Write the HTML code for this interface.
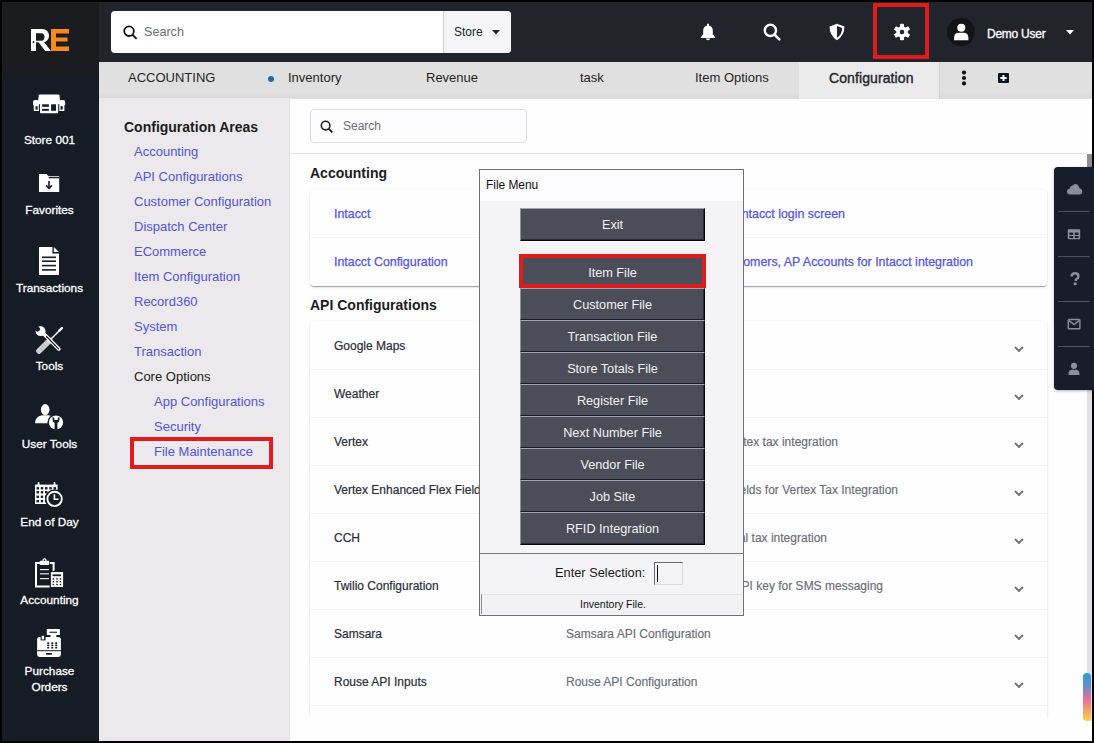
<!DOCTYPE html>
<html><head><meta charset="utf-8">
<style>
*{box-sizing:border-box;margin:0;padding:0}
html,body{width:1094px;height:743px;overflow:hidden;background:#000;font-family:"Liberation Sans",sans-serif}
div,span,svg{position:absolute}
.t{white-space:nowrap;line-height:1}
/* sidebar */
#side{left:2px;top:2px;width:97px;height:739px;background:#161c26}
#logo{left:2px;top:2px;width:97px;height:73px;background:#1b1c20}
.nav{left:1px;width:97px;text-align:center;color:#fff;font-size:11.8px;line-height:16px;-webkit-text-stroke:0.3px #fff}
/* topbar */
#top{left:99px;top:2px;width:993px;height:60px;background:#22242c}
#search{left:111px;top:11px;width:400px;height:42px;background:#fff;border-radius:4px;overflow:hidden}
#store{left:332px;top:0;width:68px;height:42px;background:#f5f4f7;border-left:1px solid #cfcfd3}
#tabs{left:99px;top:62px;width:993px;height:37px;background:#e1e0e1}
.tab{top:71px;font-size:13px;color:#1f1f1f}
#cfg{left:99px;top:98px;width:191px;height:643px;background:#ebe9eb;border-right:1px solid #e2e1e3}
.lnk{font-size:13px;color:#5256d5}
#main{left:290px;top:99px;width:802px;height:642px;background:#fefdff}
.h{font-size:14px;font-weight:bold;color:#1c1c22}
.card{background:#fefdff;border-radius:4px;box-shadow:0 2px 1px -1px rgba(0,0,0,.2),0 1px 1px 0 rgba(0,0,0,.14),0 1px 3px 0 rgba(0,0,0,.12)}
.sep{left:0;width:100%;height:1px;background:#f4f3f6}
.row{font-size:12px;color:#2b2e38;-webkit-text-stroke:0.2px #2b2e38}
.desc{font-size:12px;color:#6b6e76;-webkit-text-stroke:0.15px #6b6e76}
.clink{font-size:12.4px;color:#5357dc;-webkit-text-stroke:0.25px #5357dc}
.chev{left:1014px;width:10px;height:7px}
/* dialog */
#dlg{left:479px;top:169px;width:265px;height:447px;background:#f4f3f6;border:1px solid #707070}
.btn{left:40px;width:185px;height:32px;background:#4b4d58;color:#f2f2f2;font-size:12.7px;text-align:center;line-height:32px;border-top:1px solid #a4a5af;border-left:1px solid #8f9098;border-right:1px solid #050507;border-bottom:1px solid #191a24;box-shadow:inset -1px 0 #2c2d34}
</style></head><body>
<!-- SIDEBAR -->
<div id="side"></div>
<div id="logo"></div>
<svg style="left:30px;top:28px" width="40" height="24" viewBox="0 0 40 24">
  <path d="M1 1H11.8C16.6 1 19 4.2 19 7.8C19 11 17.2 13.4 14.2 14.2L21 23H15.2L8.6 14.2H6V23H1Z M6 5.2V12.8H11.6C13.6 12.8 14.5 10.6 14.5 8.8C14.5 6.6 13.3 5.2 11.6 5.2Z" fill="#fff" fill-rule="evenodd"/>
  <circle cx="3.5" cy="14" r="0.9" fill="#1b1c20"/>
  <path d="M21 1H39V5.4H26V9.6H37.5V13.6H26V18.6H39V23H21Z" fill="#f7891f"/>
</svg>
<div class="nav" style="top:132px">Store 001</div>
<div class="nav" style="top:202px">Favorites</div>
<div class="nav" style="top:280px">Transactions</div>
<div class="nav" style="top:358px">Tools</div>
<div class="nav" style="top:436px">User Tools</div>
<div class="nav" style="top:514px">End of Day</div>
<div class="nav" style="top:592px">Accounting</div>
<div class="nav" style="top:663px">Purchase<br>Orders</div>
<!-- store icon -->
<svg style="left:30px;top:90px" width="40" height="28" viewBox="0 0 40 28">
  <path d="M9.6 4.6H28.6Q29.2 4.6 29.4 5.3L30.4 13.2Q30.5 14.3 29.4 14.3H8.8Q7.7 14.3 7.8 13.2L8.8 5.3Q9 4.6 9.6 4.6Z" fill="#fff"/>
  <rect x="10" y="14" width="18.2" height="9.2" rx="0.8" fill="#fff"/>
  <rect x="12.1" y="14.3" width="6.8" height="2.5" fill="#161c26"/>
  <rect x="12.1" y="18.9" width="6.8" height="1.9" fill="#161c26"/>
  <rect x="21.1" y="14.3" width="4.9" height="6.5" fill="#161c26"/>
  <path d="M3 15.2V12Q3 10 5 10H7Q8.9 10 8.9 12V15.2Z" fill="#fff"/>
  <rect x="3.8" y="15" width="5.1" height="6" rx="0.6" fill="#fff"/>
  <rect x="5.5" y="16.2" width="2.2" height="3.4" fill="#161c26"/>
  <path d="M35.2 15.2V12Q35.2 10 33.2 10H31.2Q29.3 10 29.3 12V15.2Z" fill="#fff"/>
  <rect x="29.3" y="15" width="5.1" height="6" rx="0.6" fill="#fff"/>
  <rect x="30.5" y="16.2" width="2.2" height="3.4" fill="#161c26"/>
</svg>
<!-- favorites folder -->
<svg style="left:38px;top:172px" width="24" height="22" viewBox="0 0 24 22">
  <path d="M1 2H8.6L10.6 4.2H21.2V20H1Z" fill="#fff"/>
  <rect x="10.8" y="5" width="10.4" height="1.3" fill="#161c26"/>
  <path d="M11 9V16.3" stroke="#161c26" stroke-width="1.6"/>
  <path d="M8.1 13.4L11 16.4L13.9 13.4" fill="none" stroke="#161c26" stroke-width="1.6"/>
</svg>
<!-- transactions doc -->
<svg style="left:38px;top:246px" width="22" height="30" viewBox="0 0 22 30">
  <path d="M1 1H14.4V7.4H21V29H1Z" fill="#fff"/>
  <path d="M15.8 1L21 6.1H15.8Z" fill="#fff"/>
  <rect x="4" y="10.5" width="14" height="1.6" fill="#161c26"/>
  <rect x="4" y="14.4" width="14" height="1.6" fill="#161c26"/>
  <rect x="4" y="18.8" width="14" height="1.6" fill="#161c26"/>
  <rect x="4" y="23.1" width="14" height="1.6" fill="#161c26"/>
</svg>
<!-- tools -->
<svg style="left:33px;top:324px" width="30" height="30" viewBox="0 0 30 30">
  <path d="M27.8 5.2L16.5 16.5" stroke="#fff" stroke-width="1.5"/>
  <path d="M29 4L26.6 6.4" stroke="#fff" stroke-width="2.4" stroke-linecap="round"/>
  <path d="M16.6 16.4L6 27" stroke="#cfcfd2" stroke-width="5.6" stroke-linecap="round"/>
  <path d="M8.6 21.8L11.2 24.4M6.8 23.6L9.4 26.2M10.6 20.2L13.2 22.8" stroke="#8f9196" stroke-width="0.5"/>
  <path d="M9.5 8.5L25.8 25" stroke="#fff" stroke-width="3.8" stroke-linecap="round"/>
  <path d="M13.5 12.5L25.6 24.8" stroke="#161c26" stroke-width="1.2" stroke-linecap="round"/>
  <circle cx="7.6" cy="7.2" r="4.9" fill="#fff"/>
  <path d="M3.8 1.2L7.2 4.6L6.4 7L4 7.8L0.6 4.4Z" fill="#161c26"/>
</svg>
<!-- user tools -->
<svg style="left:34px;top:402px" width="30" height="30" viewBox="0 0 30 30">
  <ellipse cx="11.2" cy="7.6" rx="4.3" ry="5.6" fill="#fff"/>
  <path d="M1 21.2Q1 14.5 8 13.2H14.5Q17 13.5 18 14.5L15 21.2Z" fill="#fff"/>
  <circle cx="22" cy="20.5" r="8.6" fill="#161c26"/>
  <circle cx="22" cy="20.5" r="7.1" fill="#fff"/>
  <path d="M18.5 14.8V17.4Q18.5 19.9 20.6 20.8V28.5H23.4V20.8Q25.5 19.9 25.5 17.4V14.8L23.8 16V18.1H20.2V16Z" fill="#161c26"/>
</svg>
<!-- end of day -->
<svg style="left:34px;top:480px" width="30" height="30" viewBox="0 0 30 30">
  <rect x="1" y="4.6" width="22.6" height="19.4" fill="#fff"/>
  <rect x="3.7" y="2" width="1.8" height="4" rx="0.9" fill="#fff"/>
  <rect x="19.6" y="2" width="1.8" height="4" rx="0.9" fill="#fff"/>
  <g fill="#161c26">
    <rect x="2.5" y="7.1" width="2.5" height="2.3"/><rect x="6.8" y="7.1" width="2.4" height="2.3"/><rect x="11" y="7.1" width="2.5" height="2.3"/><rect x="15.4" y="7.1" width="2.4" height="2.3"/><rect x="19.5" y="7.1" width="2.5" height="2.3"/>
    <rect x="2.5" y="11.1" width="2.5" height="2.3"/><rect x="6.8" y="11.1" width="2.4" height="2.3"/><rect x="11" y="11.1" width="2.5" height="2.3"/><rect x="15.4" y="11.1" width="2.4" height="2.3"/><rect x="19.5" y="11.1" width="2.5" height="2.3"/>
    <rect x="2.5" y="15.6" width="2.5" height="2.3"/><rect x="6.8" y="15.6" width="2.4" height="2.3"/><rect x="11" y="15.6" width="2.5" height="2.3"/>
    <rect x="2.5" y="20" width="2.5" height="2.3"/><rect x="6.8" y="20" width="2.4" height="2.3"/><rect x="11" y="20" width="2.5" height="2.3"/>
  </g>
  <circle cx="20.6" cy="18.9" r="9.6" fill="#161c26"/>
  <circle cx="20.6" cy="18.9" r="7.2" fill="none" stroke="#fff" stroke-width="1.9"/>
  <path d="M20.4 14.3V19.2H24.6" fill="none" stroke="#fff" stroke-width="1.6"/>
</svg>
<!-- accounting -->
<svg style="left:34px;top:557px" width="30" height="32" viewBox="0 0 30 32">
  <path d="M6 6H2V29.4H19.6V15M16 6H19.6V15" fill="none" stroke="#fff" stroke-width="2"/>
  <rect x="5.8" y="3.8" width="9.4" height="4.2" rx="0.8" fill="#fff"/>
  <circle cx="10.5" cy="3.4" r="1.5" fill="none" stroke="#fff" stroke-width="1.1"/>
  <rect x="6" y="12" width="9" height="1.2" fill="#e8e8ea"/>
  <rect x="6" y="16.2" width="9" height="1.2" fill="#e8e8ea"/>
  <rect x="6" y="21" width="9" height="1.2" fill="#e8e8ea"/>
  <rect x="15.6" y="13.8" width="14.4" height="17.6" fill="#161c26"/>
  <rect x="16.9" y="15" width="12.2" height="15" rx="0.6" fill="#fff"/>
  <rect x="18.5" y="17.4" width="8.6" height="1.8" fill="#161c26"/>
  <g fill="#161c26"><rect x="18.6" y="21.2" width="1.5" height="1.4"/><rect x="22.2" y="21.2" width="1.5" height="1.4"/><rect x="25.7" y="21.2" width="1.5" height="1.4"/>
  <rect x="18.6" y="24" width="1.5" height="1.4"/><rect x="22.2" y="24" width="1.5" height="1.4"/><rect x="25.7" y="24" width="1.5" height="1.4"/>
  <rect x="18.6" y="26.8" width="1.5" height="1.4"/><rect x="22.2" y="26.8" width="1.5" height="1.4"/><rect x="25.7" y="26.8" width="1.5" height="1.4"/></g>
</svg>
<!-- purchase orders -->
<svg style="left:35px;top:627px" width="28" height="32" viewBox="0 0 28 32">
  <rect x="11.8" y="1.9" width="13.1" height="6.2" rx="0.7" fill="#fff"/>
  <rect x="14.5" y="4.7" width="7.5" height="1.1" fill="#161c26"/>
  <rect x="15.5" y="7.6" width="5.8" height="2.6" fill="#fff"/>
  <path d="M2.1 12.6Q2.1 9.9 4.6 9.9H23.4Q25.9 9.9 25.9 12.6V27.6Q25.9 30 23.5 30H4.5Q2.1 30 2.1 27.6Z" fill="#fff"/>
  <rect x="5.6" y="8.4" width="5" height="5" fill="#161c26"/>
  <rect x="6.7" y="8.8" width="2.4" height="3.6" fill="#fff"/>
  <g fill="#161c26"><rect x="12.1" y="15.2" width="2.2" height="1.7" rx="0.7"/><rect x="16.2" y="15.2" width="2.2" height="1.7" rx="0.7"/><rect x="20.1" y="15.2" width="2.2" height="1.7" rx="0.7"/>
  <rect x="12.1" y="17.6" width="2.2" height="1.7" rx="0.7"/><rect x="16.2" y="17.6" width="2.2" height="1.7" rx="0.7"/><rect x="20.1" y="17.6" width="2.2" height="1.7" rx="0.7"/>
  <rect x="12.1" y="20" width="2.2" height="1.6" rx="0.7"/><rect x="16.2" y="20" width="2.2" height="1.6" rx="0.7"/><rect x="20.1" y="20" width="2.2" height="1.6" rx="0.7"/></g>
  <rect x="2.1" y="23.2" width="23.8" height="1" fill="#161c26"/>
  <rect x="11.1" y="26.1" width="5.8" height="1.7" rx="0.5" fill="#161c26"/>
</svg>
<!-- TOPBAR -->
<div id="top"></div>
<div id="search">
  <svg style="left:11px;top:13px" width="16" height="16" viewBox="0 0 16 16"><circle cx="7" cy="7.2" r="4.8" fill="none" stroke="#111" stroke-width="1.8"/><path d="M10.4 10.6L14.6 14.8" stroke="#111" stroke-width="1.9"/></svg>
  <span class="t" style="left:33px;top:15px;font-size:12.6px;color:#6b6e74">Search</span>
  <div id="store"><span class="t" style="left:10px;top:15px;font-size:12px;color:#23262e">Store</span>
  <svg style="left:48px;top:19px" width="8" height="5" viewBox="0 0 8 5"><path d="M0 0H8L4 4.5Z" fill="#23262e"/></svg></div>
</div>

<!-- bell -->
<svg style="left:700px;top:23px" width="16" height="18" viewBox="0 0 16 18">
  <path d="M8 0.6Q9 0.6 9 1.7V2.4Q12.8 3.2 12.8 7.6V11.2L15.2 14.2V14.9H0.8V14.2L3.2 11.2V7.6Q3.2 3.2 7 2.4V1.7Q7 0.6 8 0.6Z" fill="#fff"/>
  <path d="M5.8 15.5H10.2Q9.8 17.2 8 17.2Q6.2 17.2 5.8 15.5Z" fill="#fff"/>
</svg>
<!-- search -->
<svg style="left:762px;top:22px" width="20" height="20" viewBox="0 0 20 20">
  <circle cx="8.4" cy="8.4" r="5.6" fill="none" stroke="#fff" stroke-width="2.4"/>
  <path d="M12.5 12.5L17.3 17.3" stroke="#fff" stroke-width="2.6" stroke-linecap="round"/>
</svg>
<!-- shield -->
<svg style="left:828px;top:23px" width="18" height="18" viewBox="0 0 18 18">
  <path d="M9 0.8L16.4 3.6Q16.6 12.6 9 17.2Q1.4 12.6 1.6 3.6Z" fill="#fff"/>
  <path d="M9 3.1L14.2 5.1Q14 11.8 9 14.8Z" fill="#22242c"/>
</svg>
<!-- gear -->
<svg style="left:893px;top:23px" width="18" height="18" viewBox="0 0 18 18">
  <g transform="translate(9 9)">
    <g fill="#fff">
      <rect x="-2" y="-8.2" width="4" height="16.4" rx="0.8"/>
      <rect x="-2" y="-8.2" width="4" height="16.4" rx="0.8" transform="rotate(60)"/>
      <rect x="-2" y="-8.2" width="4" height="16.4" rx="0.8" transform="rotate(120)"/>
    </g>
    <circle r="5.8" fill="#fff"/>
    <circle r="2.3" fill="#22242c"/>
  </g>
</svg>
<div style="left:873px;top:3px;width:56px;height:56px;border:4px solid #e01b1b"></div>
<!-- avatar -->
<div style="left:947px;top:18px;width:28px;height:28px;border-radius:50%;background:#141418"></div>
<svg style="left:953px;top:23px" width="16" height="18" viewBox="0 0 16 18">
  <circle cx="8.3" cy="4.8" r="4" fill="#fff"/>
  <path d="M1 17.3V15.2Q1 9.8 6 9.8H10.6Q15.4 9.8 15.4 15.2V17.3Z" fill="#fff"/>
</svg>
<span class="t" style="left:987px;top:28px;font-size:12px;color:#fff;letter-spacing:-0.25px;-webkit-text-stroke:0.3px #fff">Demo User</span>
<svg style="left:1066px;top:30px" width="8" height="5" viewBox="0 0 8 5"><path d="M0 0H8L4 4.5Z" fill="#fff"/></svg>

<div id="tabs"></div>
<div style="left:99px;top:93px;width:993px;height:5px;background:linear-gradient(rgba(0,0,0,0),rgba(0,0,0,.025))"></div>
<div style="left:799px;top:62px;width:140px;height:37px;background:#ebeaeb"></div>
<div style="left:939px;top:62px;width:1px;height:37px;background:#cfcfd1"></div>
<span class="t tab" style="left:128px">ACCOUNTING</span>
<div style="left:268px;top:76px;width:6px;height:6px;border-radius:50%;background:#1a6ea8"></div>
<span class="t tab" style="left:288px">Inventory</span>
<span class="t tab" style="left:426px">Revenue</span>
<span class="t tab" style="left:580px">task</span>
<span class="t tab" style="left:695px">Item Options</span>
<span class="t tab" style="left:829px;top:71px;font-size:14px;color:#26272d;-webkit-text-stroke:0.4px #26272d;letter-spacing:0.1px">Configuration</span>
<svg style="left:961px;top:70px" width="6" height="16" viewBox="0 0 6 16"><circle cx="3" cy="2.6" r="2.1" fill="#111"/><circle cx="3" cy="8" r="2.1" fill="#111"/><circle cx="3" cy="13.4" r="2.1" fill="#111"/></svg>
<svg style="left:998px;top:73px" width="11" height="10" viewBox="0 0 11 10"><rect x="0" y="0" width="11" height="10" rx="1" fill="#0f1326"/><path d="M5.5 2V8M2.3 5H8.7" stroke="#fff" stroke-width="2"/></svg>

<!-- CONFIG PANEL -->
<div id="cfg"></div>
<span class="t h" style="left:124px;top:120px">Configuration Areas</span>
<span class="t lnk" style="left:134px;top:145px">Accounting</span>
<span class="t lnk" style="left:134px;top:170px">API Configurations</span>
<span class="t lnk" style="left:134px;top:195px">Customer Configuration</span>
<span class="t lnk" style="left:134px;top:220px">Dispatch Center</span>
<span class="t lnk" style="left:134px;top:245px">ECommerce</span>
<span class="t lnk" style="left:134px;top:270px">Item Configuration</span>
<span class="t lnk" style="left:134px;top:295px">Record360</span>
<span class="t lnk" style="left:134px;top:320px">System</span>
<span class="t lnk" style="left:134px;top:345px">Transaction</span>
<span class="t lnk" style="left:134px;top:370px;color:#222">Core Options</span>
<span class="t lnk" style="left:154px;top:395px">App Configurations</span>
<span class="t lnk" style="left:154px;top:420px">Security</span>
<span class="t lnk" style="left:154px;top:445px">File Maintenance</span>
<div style="left:130px;top:437px;width:143px;height:32px;border:4px solid #e01b1b"></div>

<!-- MAIN -->
<div id="main"></div>
<div style="left:310px;top:109px;width:217px;height:34px;border:1px solid #dcdbde;border-radius:4px;background:#fdfcfe"></div>
<svg style="left:320px;top:120px" width="14" height="13" viewBox="0 0 14 13"><circle cx="5.6" cy="5.6" r="4.3" fill="none" stroke="#222" stroke-width="1.6"/><path d="M8.8 8.8L12.3 12.3" stroke="#222" stroke-width="1.8"/></svg>
<span class="t" style="left:343px;top:120px;font-size:12px;color:#6e7076">Search</span>
<div style="left:289px;top:153px;width:798px;height:1px;background:#e4e3e6"></div>

<span class="t h" style="left:310px;top:166px">Accounting</span>
<div class="card" style="left:310px;top:190px;width:737px;height:96px">
  <div class="sep" style="top:47px"></div>
</div>
<span class="t clink" style="left:334px;top:208px">Intacct</span>
<span class="t clink" style="left:334px;top:256px">Intacct Configuration</span>
<span class="t clink" style="left:600px;top:208px;width:245px;text-align:right">Open the Intacct login screen</span>
<span class="t clink" style="left:600px;top:256px;width:373px;text-align:right">Map Customers, AP Accounts for Intacct integration</span>

<span class="t h" style="left:310px;top:298px">API Configurations</span>
<div style="left:300px;top:300px;width:760px;height:417px;overflow:hidden">
<div class="card" style="left:10px;top:21px;width:737px;height:420px">
  <div class="sep" style="top:48px"></div><div class="sep" style="top:96px"></div><div class="sep" style="top:144px"></div><div class="sep" style="top:192px"></div>
  <div class="sep" style="top:240px"></div><div class="sep" style="top:288px"></div><div class="sep" style="top:336px"></div><div class="sep" style="top:384px"></div>
</div></div>
<span class="t row" style="left:334px;top:340px">Google Maps</span>
<span class="t row" style="left:334px;top:388px">Weather</span>
<span class="t row" style="left:334px;top:436px">Vertex</span>
<span class="t row" style="left:334px;top:484px">Vertex Enhanced Flex Fields</span>
<span class="t row" style="left:334px;top:532px">CCH</span>
<span class="t row" style="left:334px;top:580px">Twilio Configuration</span>
<span class="t row" style="left:334px;top:628px">Samsara</span>
<span class="t row" style="left:334px;top:676px">Rouse API Inputs</span>
<span class="t desc" style="left:566px;top:436px;width:272px;text-align:right">API key for Vertex tax integration</span>
<span class="t desc" style="left:566px;top:484px;width:332px;text-align:right">Flex Fields for Vertex Tax Integration</span>
<span class="t desc" style="left:566px;top:532px;width:261px;text-align:right">API key for CCH global tax integration</span>
<span class="t desc" style="left:566px;top:580px;width:317px;text-align:right">Twilio API key for SMS messaging</span>
<span class="t desc" style="left:566px;top:628px">Samsara API Configuration</span>
<span class="t desc" style="left:566px;top:676px">Rouse API Configuration</span>
<svg class="chev" style="top:346px" viewBox="0 0 10 7"><path d="M1 1L5 5L9 1" fill="none" stroke="#6e6e73" stroke-width="1.8"/></svg>
<svg class="chev" style="top:394px" viewBox="0 0 10 7"><path d="M1 1L5 5L9 1" fill="none" stroke="#6e6e73" stroke-width="1.8"/></svg>
<svg class="chev" style="top:442px" viewBox="0 0 10 7"><path d="M1 1L5 5L9 1" fill="none" stroke="#6e6e73" stroke-width="1.8"/></svg>
<svg class="chev" style="top:490px" viewBox="0 0 10 7"><path d="M1 1L5 5L9 1" fill="none" stroke="#6e6e73" stroke-width="1.8"/></svg>
<svg class="chev" style="top:538px" viewBox="0 0 10 7"><path d="M1 1L5 5L9 1" fill="none" stroke="#6e6e73" stroke-width="1.8"/></svg>
<svg class="chev" style="top:586px" viewBox="0 0 10 7"><path d="M1 1L5 5L9 1" fill="none" stroke="#6e6e73" stroke-width="1.8"/></svg>
<svg class="chev" style="top:634px" viewBox="0 0 10 7"><path d="M1 1L5 5L9 1" fill="none" stroke="#6e6e73" stroke-width="1.8"/></svg>
<svg class="chev" style="top:682px" viewBox="0 0 10 7"><path d="M1 1L5 5L9 1" fill="none" stroke="#6e6e73" stroke-width="1.8"/></svg>

<!-- scrollbar -->
<div style="left:1087px;top:154px;width:5px;height:567px;background:#e0dfe2"></div>
<div style="left:1087px;top:154px;width:5px;height:200px;background:#8b8e95"></div>
<div style="left:1083px;top:673px;width:8px;height:48px;border-radius:4px;background:linear-gradient(#2a9ddb,#5f8fd0 25%,#ee6c9c 55%,#f4a56a 80%,#fdd33a)"></div>

<!-- right floating panel -->
<div style="left:1054px;top:167px;width:40px;height:223px;background:#171d2b;border-radius:4px 0 0 4px;box-shadow:0 1px 3px rgba(0,0,0,.3)"></div>
<div style="left:1058px;top:211px;width:32px;height:1px;background:#4b5162"></div>
<div style="left:1058px;top:256px;width:32px;height:1px;background:#4b5162"></div>
<div style="left:1058px;top:301px;width:32px;height:1px;background:#4b5162"></div>
<div style="left:1058px;top:346px;width:32px;height:1px;background:#4b5162"></div>
<svg style="left:1066px;top:182px" width="17" height="14" viewBox="0 0 17 14">
  <path d="M4 12.5Q1 12.5 1 9.6Q1 7 3.6 6.8Q4 3.8 7 3.3Q9.3 1.2 11.5 2.8Q13.3 3.8 13.3 6.3Q16.2 6.8 16.2 9.6Q16.2 12.5 13.2 12.5Z" fill="#8a8f9b"/>
</svg>
<svg style="left:1067px;top:228px" width="14" height="12" viewBox="0 0 14 12">
  <rect x="0.8" y="1.3" width="12.4" height="10" rx="1" fill="#8a8f9b"/>
  <rect x="2.4" y="4.6" width="3.8" height="2.3" fill="#171d2b"/><rect x="7.8" y="4.6" width="3.8" height="2.3" fill="#171d2b"/>
  <rect x="2.4" y="8" width="3.8" height="2" fill="#171d2b"/><rect x="7.8" y="8" width="3.8" height="2" fill="#171d2b"/>
</svg>
<svg style="left:1069px;top:272px" width="12" height="14" viewBox="0 0 12 14">
  <path d="M2.6 4.6Q2.6 1.3 6 1.3Q9.4 1.3 9.4 4.2Q9.4 6 7.5 7Q6.8 7.4 6.8 8.4V9" fill="none" stroke="#8a8f9b" stroke-width="2.5"/>
  <rect x="4.7" y="10.6" width="2.9" height="2.6" rx="0.6" fill="#8a8f9b"/>
</svg>
<svg style="left:1067px;top:318px" width="14" height="12" viewBox="0 0 14 12">
  <rect x="1.3" y="1.5" width="11.6" height="9.2" rx="0.8" fill="none" stroke="#8a8f9b" stroke-width="1.4"/>
  <path d="M1.8 2.4L7.1 6.6L12.4 2.4" fill="none" stroke="#8a8f9b" stroke-width="1.4"/>
</svg>
<svg style="left:1068px;top:362px" width="12" height="14" viewBox="0 0 12 14">
  <circle cx="6" cy="3.8" r="3.1" fill="#8a8f9b"/>
  <path d="M0.6 13V11.4Q0.6 7.8 4 7.8H8Q11.4 7.8 11.4 11.4V13Z" fill="#8a8f9b"/>
</svg>

<!-- DIALOG -->
<div id="dlg">
  <div style="left:0;top:0;width:263px;height:31px;background:#fcfbfd"></div>
  <span class="t" style="left:6px;top:10px;font-size:11.9px;color:#111">File Menu</span>
  <div class="btn" style="top:38px;height:33px;border-bottom:1px solid #050507;box-shadow:inset -1px -1px #2c2d34;line-height:32px">Exit</div>
  <div class="btn" style="top:86px">Item File</div>
  <div class="btn" style="top:118px">Customer File</div>
  <div class="btn" style="top:150px">Transaction File</div>
  <div class="btn" style="top:182px">Store Totals File</div>
  <div class="btn" style="top:214px">Register File</div>
  <div class="btn" style="top:246px">Next Number File</div>
  <div class="btn" style="top:278px">Vendor File</div>
  <div class="btn" style="top:310px">Job Site</div>
  <div class="btn" style="top:342px;height:33px;border-bottom:1px solid #050507;box-shadow:inset -1px -1px #2c2d34;line-height:32px">RFID Integration</div>
  <div style="left:39px;top:84px;width:187px;height:34px;border:4px solid #e01b1b"></div>
  <div style="left:0;top:383px;width:263px;height:1px;background:#7a7a7a"></div>
  <span class="t" style="left:75px;top:397px;font-size:12.8px;color:#1a1a1a">Enter Selection:</span>
  <div style="left:174px;top:392px;width:29px;height:23px;border:1px solid #dcdcdc;border-top-color:#6a6a6a;border-left-color:#6a6a6a;background:#f4f3f6"></div>
  <div style="left:177px;top:395px;width:1px;height:17px;background:#111"></div>
  <div style="left:1px;top:424px;width:261px;height:20px;border-left:1px solid #8a8a8a;border-top:1px solid #e4e4e6;background:#f2f1f4"></div>
  <span class="t" style="left:100px;top:429px;font-size:10.5px;color:#111">Inventory File.</span>
</div>
</body></html>
